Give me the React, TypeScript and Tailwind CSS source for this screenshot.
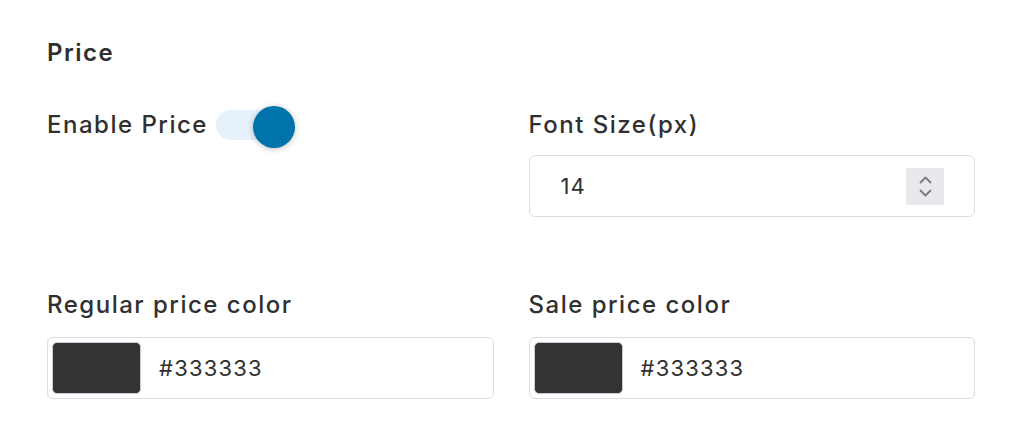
export default function App() {
  return (
    <div
      className="h-[448px] w-[1024px] bg-white text-[#303030]"
      style={{ fontFamily: "Inter, 'Noto Sans', sans-serif" }}
    >
      <div className="pl-[47px] pr-[49px] pt-[37px]">
        <h2 className="text-[24px] font-semibold leading-[32px] tracking-[1.5px]">Price</h2>

        <div className="mt-[40px] grid grid-cols-2 gap-x-[35px]">
          <div className="flex h-[32px] items-center">
            <span className="text-[24px] font-medium leading-[32px] tracking-[1.5px]">Enable Price</span>
            <div className="relative ml-[8px] h-[30px] w-[68px]">
              <div className="h-full w-full rounded-full bg-[#e6f1fb]" />
              <div className="absolute left-[37px] top-[-4px] h-[42px] w-[42px] rounded-full bg-[#0073aa] shadow-[0_1px_6px_rgba(0,0,0,0.25)]" />
            </div>
          </div>

          <div>
            <label className="block text-[24px] font-medium leading-[32px] tracking-[1.5px]">Font Size(px)</label>
            <div className="mt-[14px] flex h-[62px] items-center rounded-[6px] border border-[#dcdbe6] pl-[31px] pr-[30px]">
              <span className="flex-1 text-[22px] tracking-[1px]">14</span>
              <div className="flex h-[37px] w-[38px] flex-col items-center justify-center gap-[5px] bg-[#e8e8ed]">
                <svg width="13" height="8" viewBox="0 0 13 8" fill="none">
                  <path d="M1.5 6.5L6.5 1.5L11.5 6.5" stroke="#7a7a80" strokeWidth="1.8" strokeLinecap="round" strokeLinejoin="round" />
                </svg>
                <svg width="13" height="8" viewBox="0 0 13 8" fill="none">
                  <path d="M1.5 1.5L6.5 6.5L11.5 1.5" stroke="#7a7a80" strokeWidth="1.8" strokeLinecap="round" strokeLinejoin="round" />
                </svg>
              </div>
            </div>
          </div>
        </div>

        <div className="mt-[72px] grid grid-cols-2 gap-x-[35px]">
          {["Regular price color", "Sale price color"].map((label) => (
            <div key={label}>
              <label className="block text-[24px] font-medium leading-[32px] tracking-[1.5px]">{label}</label>
              <div className="mt-[16px] flex h-[62px] items-center rounded-[6px] border border-[#dcdbe6] p-[4px]">
                <div className="h-[52px] w-[89px] rounded-[5px] border border-[#c9c9d2] bg-[#333333]" />
                <span className="ml-[18px] text-[22px] tracking-[1.2px]">#333333</span>
              </div>
            </div>
          ))}
        </div>
      </div>
    </div>
  );
}
